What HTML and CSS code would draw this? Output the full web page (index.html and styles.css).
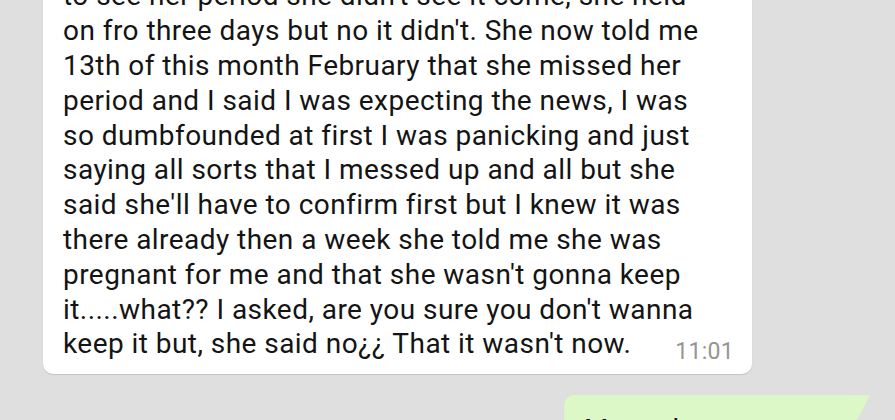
FILE: index.html
```html
<!DOCTYPE html>
<html>
<head>
<meta charset="utf-8">
<link rel="stylesheet" href="styles.css">
</head>
<body>
<div class="chat">
  <div class="chat-inner">
    <div class="bubble incoming">
      <p class="msg-text">to see her period she didn't see it come, she held<br>on fro three days but no it didn't. She now told me<br>13th of this month February that she missed her<br>period and I said I was expecting the news, I was<br>so dumbfounded at first I was panicking and just<br>saying all sorts that I messed up and all but she<br>said she'll have to confirm first but I knew it was<br>there already then a week she told me she was<br>pregnant for me and that she wasn't gonna keep<br>it.....what?? I asked, are you sure you don't wanna<br>keep it but, she said no¿¿ That it wasn't now.<span class="time">11:01</span></p>
    </div>
    <div class="bubble outgoing">
      <p class="msg-text">Me and</p>
    </div>
  </div>
</div>
</body>
</html>
```
FILE: styles.css
```css
html, body {
  margin: 0;
  padding: 0;
}
body {
  background: #dfdfdf;
  font-family: Roboto, "Noto Sans", sans-serif;
  width: 895px;
  height: 420px;
  overflow: hidden;
}
.chat {
  height: 420px;
  overflow: hidden;
  display: flex;
  flex-direction: column;
  justify-content: flex-end;
}
.chat-inner {
  display: flex;
  flex-direction: column;
  gap: 21px;
  margin-bottom: -40px;
}
.bubble {
  position: relative;
  box-shadow: 0 1px 1px rgba(0, 0, 0, 0.13);
}
.incoming {
  align-self: flex-start;
  margin-left: 43px;
  width: 709px;
  box-sizing: border-box;
  background: #ffffff;
  border-radius: 10px;
  padding: 0 18px 11px 20px;
}
.msg-text {
  margin: 0;
  font-size: 28px;
  line-height: 34.8px;
  letter-spacing: 0.45px;
  color: #141414;
  display: flow-root;
  white-space: nowrap;
}
.time {
  float: right;
  font-size: 23px;
  line-height: 23px;
  letter-spacing: 0.3px;
  color: #959595;
  margin-top: 12.8px;
  margin-left: 20px;
}
.outgoing {
  align-self: flex-start;
  margin-left: 564px;
  width: 286px;
  box-sizing: border-box;
  background: #dcf8c6;
  border-radius: 10px 0 10px 10px;
  padding: 18px 20px 12px 20px;
}
.outgoing::after {
  content: "";
  position: absolute;
  top: 0;
  right: -20px;
  width: 20px;
  height: 38px;
  background: #dcf8c6;
  clip-path: polygon(0 0, 100% 0, 0 100%);
}
```
